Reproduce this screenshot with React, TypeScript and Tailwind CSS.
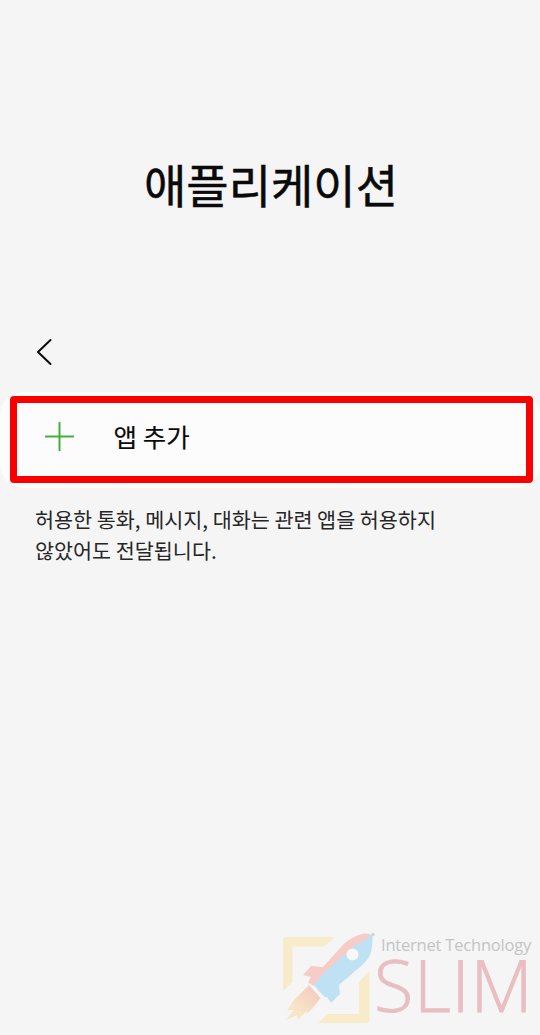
const KR = "font-['Noto_Sans_CJK_KR',sans-serif]";

function BackIcon() {
  return (
    <svg width="18" height="28" viewBox="0 0 18 28" fill="none" stroke="#0a0a0a" strokeWidth="2" strokeLinecap="round" strokeLinejoin="round">
      <path d="M15.5 2 L3 14 L15.5 26" />
    </svg>
  );
}

function PlusIcon() {
  return (
    <svg width="30" height="30" viewBox="0 0 30 30" fill="none" stroke="#45ad3b" strokeWidth="2">
      <path d="M14.5 0.8 V28.2 M0.8 14.5 H28.2" strokeLinecap="round" />
    </svg>
  );
}

function RocketLogo() {
  return (
    <svg width="96" height="94" viewBox="0 0 96 94" className="shrink-0">
      <defs>
        <linearGradient id="flame" x1="1" y1="0" x2="0" y2="1">
          <stop offset="0.1" stopColor="#f4cbbf" />
          <stop offset="0.75" stopColor="#f8e7c6" />
        </linearGradient>
      </defs>
      <path d="M2 60 V9 Q2 6 5 6 H54 L43 15.5 H11.5 V51 Z" fill="#f8ebc9" />
      <path d="M88.5 40 V88 Q88.5 92 84.5 92 H37 L47 83 H78 V51 Z" fill="#f8ebc9" />
      <path d="M89 3 Q82 1 73 6 Q65 10 60 16 L42 36 L30 35 L22 44 L30 46 L27 51.5 L33 55 L72 22 L90 5 Z" fill="#f6cdc6" />
      <path d="M90 4 Q84 10 74 14 L43 42 Q36 50 32.5 53.5 Q38 61 44 66 L46 66 L50 72 L59 63 L58 54 L73 41 Q86 31 89 24 Q92 16 91.5 4 Z" fill="#bee2f4" />
      <circle cx="71.5" cy="23.5" r="6" fill="#f8f8f8" />
      <circle cx="92" cy="3.5" r="1.8" fill="#c7d6df" />
      <path d="M28 54 L39.5 67 L31 78 L25 83 L26 79 L17 89 L16 84 L5 89 L13 79 L6 79 L14 68 Z" fill="url(#flame)" />
    </svg>
  );
}

function Watermark() {
  return (
    <footer className="mt-auto ml-[281px] flex h-[104px] items-start">
      <RocketLogo />
      <div className="flex flex-col whitespace-nowrap font-['Open_Sans',sans-serif]">
        <span className="ml-[4px] h-[24px] text-[16.5px] leading-[28px] tracking-[-0.2px] text-[#c4c4c4]">Internet Technology</span>
        <span className="-ml-[3px] h-[64px] text-[72px] font-light leading-[58px] tracking-[0.7px] text-[#e9bec3] [-webkit-text-stroke:0.8px_#e9bec3]">SLIM</span>
      </div>
    </footer>
  );
}

export default function App() {
  return (
    <main className={`flex h-[1035px] w-[540px] flex-col overflow-hidden bg-[#f5f5f5] ${KR}`}>
      <h1 className="mt-[148px] h-[70px] pl-[2px] text-center text-[46px] font-normal leading-[70px] text-[#0a0a0a] [-webkit-text-stroke:0.5px_#0a0a0a]">애플리케이션</h1>
      <button className="mt-[120px] ml-[35px] h-[28px] w-[18px]" aria-label="뒤로">
        <BackIcon />
      </button>
      <section className="mt-[26px] h-[96px] rounded-[24px] bg-[#fcfcfc] pt-1 pr-[7px] pl-[10px]">
        <button className="flex h-[87px] w-full items-center rounded-[4px] border-[7px] border-[#fa0000] pb-[5px] pl-[28px] text-[25.5px] font-normal text-[#0a0a0a]">
          <PlusIcon />
          <span className="-mt-[2px] ml-[38.5px] [-webkit-text-stroke:0.15px_#0a0a0a]">앱 추가</span>
        </button>
      </section>
      <p className="mt-[16px] ml-[35px] whitespace-nowrap text-[20.7px] leading-[31px] text-[#262626]">
        허용한 통화, 메시지, 대화는 관련 앱을 허용하지
        <br />
        않았어도 전달됩니다.
      </p>
      <Watermark />
    </main>
  );
}
